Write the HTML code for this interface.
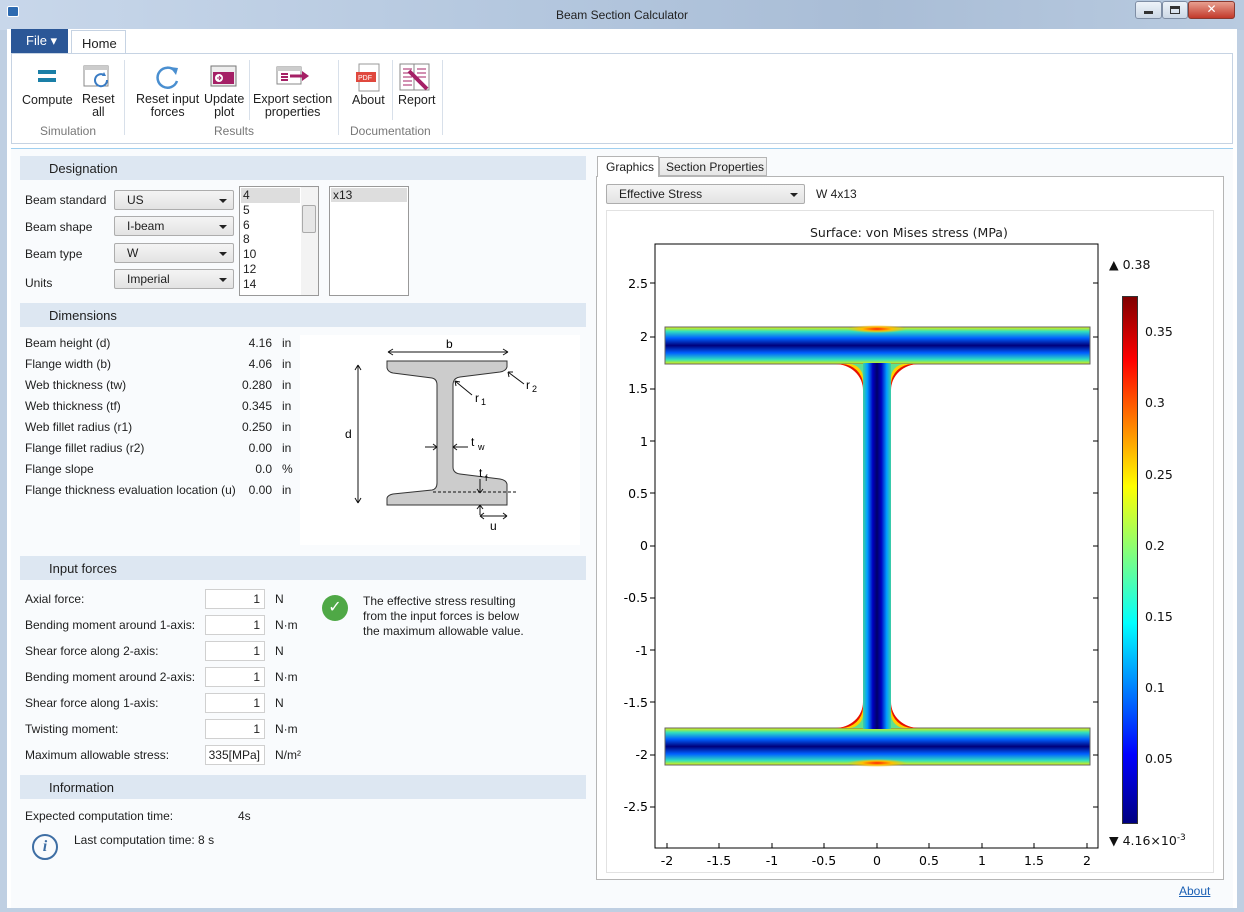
<!DOCTYPE html>
<html><head><meta charset="utf-8"><style>
*{box-sizing:border-box;margin:0;padding:0}
body{width:1244px;height:912px;position:relative;overflow:hidden;font-family:"Segoe UI","Liberation Sans","DejaVu Sans",sans-serif;font-size:12px;color:#1e1e1e;background:#bfcfe2}
.a{position:absolute}
.t{position:absolute;white-space:nowrap}
.hdr{position:absolute;left:20px;width:566px;height:24px;background:#dde7f2;font-size:13px;padding:5px 0 0 29px}
.sel{position:absolute;left:114px;width:120px;height:20px;border:1px solid #adadad;border-radius:2px;background:linear-gradient(#f4f4f4,#e3e3e3);padding:2px 0 0 12px}
.sel:after{content:"";position:absolute;right:6px;top:8px;border:4px solid transparent;border-top:4px solid #222;border-bottom:0}
.inp{position:absolute;left:205px;width:60px;height:20px;border:1px solid #d0d0d0;background:#fff;text-align:right;padding:2px 4px 0 0;font-size:12px}
.ax{position:absolute;font-size:12.5px;font-family:"DejaVu Sans",sans-serif;color:#111}
</style></head><body>
<div class="a" style="left:0;top:0;width:1244px;height:30px;background:linear-gradient(90deg,#c8d7ea,#b5c8df 40%,#a9bdd6 70%,#b9cbe0)"></div>
<div class="a" style="left:7px;top:6px;width:12px;height:11px;background:#2d6ab0;border:1px solid #fff;border-radius:2px"></div>
<div class="t" style="left:0;width:1244px;text-align:center;top:8px;font-size:12px;color:#222">Beam Section Calculator</div>
<div class="a" style="left:1135px;top:1px;width:27px;height:18px;border:1px solid #7f8ea5;border-radius:3px;background:linear-gradient(#eef3f9,#ccd8e6)"></div>
<div class="a" style="left:1162px;top:1px;width:26px;height:18px;border:1px solid #7f8ea5;border-radius:3px;background:linear-gradient(#eef3f9,#ccd8e6)"></div>
<div class="a" style="left:1188px;top:1px;width:47px;height:18px;border:1px solid #8a3a30;border-radius:3px;background:linear-gradient(#e8a090,#c2392a);color:#fff;text-align:center;font-weight:bold;font-size:12px">✕</div>
<div class="a" style="left:1144px;top:11px;width:9px;height:3px;background:#333"></div>
<div class="a" style="left:1170px;top:6px;width:10px;height:8px;border:1px solid #333;border-top-width:3px"></div>
<div class="a" style="left:7px;top:29px;width:1230px;height:879px;background:#fff"></div>
<div class="a" style="left:11px;top:29px;width:57px;height:24px;background:#2b5797;color:#fff;font-size:13px;padding:4px 0 0 15px">File ▾</div>
<div class="a" style="left:71px;top:30px;width:55px;height:24px;background:#fff;border:1px solid #c6d3e3;border-bottom:none;font-size:13px;padding:5px 0 0 10px">Home</div>
<div class="a" style="left:11px;top:53px;width:1222px;height:91px;border:1px solid #c6d3e3;background:#fff"></div>
<div class="a" style="left:38px;top:70px;width:18px;height:4px;background:#1a7fa7"></div>
<div class="a" style="left:38px;top:78px;width:18px;height:4px;background:#1a7fa7"></div>
<svg class="a" style="left:82px;top:64px" width="30" height="26"><rect x="2" y="2" width="24" height="20" fill="#fff" stroke="#888"/><rect x="2" y="2" width="24" height="4" fill="#ccc"/><path d="M25 16a6 6 0 1 1-3-5" fill="none" stroke="#3a7cc4" stroke-width="2"/><path d="M22 8l2 4-4 0z" fill="#3a7cc4"/></svg>
<svg class="a" style="left:153px;top:63px" width="28" height="28"><path d="M22 8A10 10 0 1 0 24 18" fill="none" stroke="#4a8fd0" stroke-width="2.5"/><path d="M17 4l8 1-2 7z" fill="#4a8fd0"/></svg>
<svg class="a" style="left:210px;top:65px" width="28" height="24"><rect x="1" y="1" width="25" height="20" fill="#eee" stroke="#777"/><rect x="3" y="7" width="21" height="12" fill="#a52066"/><circle cx="9" cy="13" r="4" fill="#fff"/><path d="M7 13h4M9 11l2 2-2 2" stroke="#a52066" fill="none"/></svg>
<svg class="a" style="left:276px;top:66px" width="34" height="20"><rect x="1" y="1" width="24" height="17" fill="#fff" stroke="#888"/><rect x="1" y="1" width="24" height="4" fill="#ccc"/><g fill="#a52066"><rect x="5" y="7" width="7" height="2"/><rect x="5" y="10" width="7" height="2"/><rect x="5" y="13" width="7" height="2"/></g><path d="M14 10h14" stroke="#a52066" stroke-width="3"/><path d="M26 5l7 5-7 5z" fill="#a52066"/></svg>
<svg class="a" style="left:355px;top:63px" width="26" height="30"><rect x="4" y="1" width="20" height="27" fill="#fff" stroke="#999"/><rect x="1" y="9" width="20" height="10" fill="#e0483e"/><text x="3" y="17" font-size="7" fill="#fff" font-family="Liberation Sans">PDF</text></svg>
<svg class="a" style="left:399px;top:63px" width="32" height="30"><rect x="1" y="1" width="29" height="26" fill="#fff" stroke="#888"/><path d="M15 1v26" stroke="#888"/><g stroke="#a52066"><path d="M4 6h9M4 10h9M4 14h9M4 18h9M4 22h9M18 6h9M18 10h9M18 14h9"/></g><path d="M10 8l18 18" stroke="#a52066" stroke-width="4"/></svg>
<div class="t" style="left:22px;top:93px;font-size:12.5px">Compute</div>
<div class="t" style="left:82px;top:93px;font-size:12.5px;text-align:center;line-height:13px">Reset<br>all</div>
<div class="t" style="left:136px;top:93px;font-size:12.5px;text-align:center;line-height:13px">Reset input<br>forces</div>
<div class="t" style="left:204px;top:93px;font-size:12.5px;text-align:center;line-height:13px">Update<br>plot</div>
<div class="t" style="left:253px;top:93px;font-size:12.5px;text-align:center;line-height:13px">Export section<br>properties</div>
<div class="t" style="left:352px;top:93px;font-size:12.5px">About</div>
<div class="t" style="left:398px;top:93px;font-size:12.5px">Report</div>
<div class="t" style="left:40px;top:124px;color:#777">Simulation</div>
<div class="t" style="left:214px;top:124px;color:#777">Results</div>
<div class="t" style="left:350px;top:124px;color:#777">Documentation</div>
<div class="a" style="left:124px;top:60px;width:1px;height:75px;background:#d8e0ea"></div>
<div class="a" style="left:249px;top:60px;width:1px;height:60px;background:#d8e0ea"></div>
<div class="a" style="left:338px;top:60px;width:1px;height:75px;background:#d8e0ea"></div>
<div class="a" style="left:392px;top:60px;width:1px;height:60px;background:#d8e0ea"></div>
<div class="a" style="left:442px;top:60px;width:1px;height:75px;background:#d8e0ea"></div>
<div class="a" style="left:11px;top:148px;width:1222px;height:760px;background:#f9fbfd;border-top:1px solid #9fcff0"></div>
<div class="hdr" style="top:156px">Designation</div>
<div class="hdr" style="top:303px">Dimensions</div>
<div class="hdr" style="top:556px">Input forces</div>
<div class="hdr" style="top:775px">Information</div>
<div class="t" style="left:25px;top:193px">Beam standard</div>
<div class="t" style="left:25px;top:220px">Beam shape</div>
<div class="t" style="left:25px;top:247px">Beam type</div>
<div class="t" style="left:25px;top:276px">Units</div>
<div class="sel" style="top:190px">US</div>
<div class="sel" style="top:216px">I-beam</div>
<div class="sel" style="top:243px">W</div>
<div class="sel" style="top:269px">Imperial</div>
<div class="a" style="left:239px;top:186px;width:80px;height:110px;border:1px solid #999;background:#fff;line-height:14.8px;padding:1px 0 0 3px;font-family:'Liberation Sans';font-size:12px">
<div style="background:#ddd;margin:0 18px 0 -2px;padding-left:2px">4</div>5<br>6<br>8<br>10<br>12<br>14</div>
<div class="a" style="left:301px;top:187px;width:17px;height:108px;background:#f3f3f3"></div>
<div class="a" style="left:302px;top:205px;width:14px;height:28px;border:1px solid #aaa;border-radius:2px;background:#e6e6e6"></div>
<div class="a" style="left:329px;top:186px;width:80px;height:110px;border:1px solid #999;background:#fff;padding:1px;font-family:'Liberation Sans'"><div style="background:#ddd;padding-left:2px">x13</div></div>
<div class="a" style="left:25px;top:333px;width:280px;height:210px;line-height:21px">
<div>Beam height (d)</div><div>Flange width (b)</div><div>Web thickness (tw)</div><div>Web thickness (tf)</div><div>Web fillet radius (r1)</div><div>Flange fillet radius (r2)</div><div>Flange slope</div><div>Flange thickness evaluation location (u)</div></div>
<div class="a" style="left:200px;top:333px;width:72px;line-height:21px;text-align:right">4.16<br>4.06<br>0.280<br>0.345<br>0.250<br>0.00<br>0.0<br>0.00</div>
<div class="a" style="left:282px;top:333px;line-height:21px">in<br>in<br>in<br>in<br>in<br>in<br>%<br>in</div>
<div class="a" style="left:300px;top:335px;width:280px;height:210px;background:#fff"></div>
<svg class="a" style="left:300px;top:335px" width="280" height="210" font-family="Liberation Sans" font-size="12">
<path d="M87 26H207V32Q206 36 200 37L160 42Q153 43 153 50V132Q153 138 160 139L200 144Q206 145 207 149V170H87V163Q88 160 93 159L132 155Q137 154 137 148V50Q137 44 132 43L93 38Q88 37 87 33Z" fill="#ccc" stroke="#333"/>
<path d="M88 17H208M88 17l5-3M88 17l5 3M208 17l-5-3M208 17l-5 3" stroke="#111" fill="none"/>
<text x="146" y="13">b</text>
<path d="M58 30V168M58 30l-3 5M58 30l3 5M58 168l-3-5M58 168l3-5" stroke="#111" fill="none"/>
<text x="45" y="103">d</text>
<path d="M125 112h12M137 112l-4-3M137 112l-4 3M168 112h-15M153 112l4-3M153 112l4 3" stroke="#111" fill="none"/>
<text x="171" y="111">t</text><text x="178" y="115" font-size="9">w</text>
<path d="M133 157H217" stroke="#111" stroke-dasharray="3 2"/>
<path d="M180 144v14M180 158l-3-4M180 158l3-4" stroke="#111" fill="none"/>
<text x="179" y="142">t</text><text x="185" y="146" font-size="9">f</text>
<path d="M180 170v10M180 170l-3 4M180 170l3 4M180 181h27M180 181l4-3M180 181l4 3M207 181l-4-3M207 181l-4 3" stroke="#111" fill="none"/>
<text x="190" y="195">u</text>
<path d="M155 46l17 14M155 46l5 1M155 46l1 5" stroke="#111" fill="none"/>
<text x="175" y="67">r</text><text x="181" y="70" font-size="9">1</text>
<path d="M208 37l16 12M208 37l5 0M208 37l1 5" stroke="#111" fill="none"/>
<text x="226" y="54">r</text><text x="232" y="57" font-size="9">2</text>
</svg>
<div class="a" style="left:25px;top:586px;line-height:26px">Axial force:<br>Bending moment around 1-axis:<br>Shear force along 2-axis:<br>Bending moment around 2-axis:<br>Shear force along 1-axis:<br>Twisting moment:<br>Maximum allowable stress:</div>
<div class="inp" style="top:589px">1</div><div class="inp" style="top:615px">1</div><div class="inp" style="top:641px">1</div><div class="inp" style="top:667px">1</div><div class="inp" style="top:693px">1</div><div class="inp" style="top:719px">1</div><div class="inp" style="top:745px">335[MPa]</div>
<div class="a" style="left:275px;top:586px;line-height:26px">N<br>N·m<br>N<br>N·m<br>N<br>N·m<br>N/m²</div>
<div class="a" style="left:322px;top:595px;width:26px;height:26px;border-radius:50%;background:#4fa846;color:#fff;text-align:center;font-size:16px;line-height:26px">✓</div>
<div class="t" style="left:363px;top:594px;line-height:15px">The effective stress resulting<br>from the input forces is below<br>the maximum allowable value.</div>
<div class="t" style="left:25px;top:809px">Expected computation time:</div>
<div class="t" style="left:238px;top:809px">4s</div>
<div class="a" style="left:32px;top:834px;width:26px;height:26px;border-radius:50%;border:2px solid #3e6ea4;color:#3e6ea4;text-align:center;font:italic bold 16px/22px 'Liberation Serif',serif">i</div>
<div class="t" style="left:74px;top:833px">Last computation time: 8 s</div>
<div class="a" style="left:596px;top:176px;width:628px;height:704px;border:1px solid #b5b5b5;background:#fff"></div>
<div class="a" style="left:597px;top:156px;width:62px;height:21px;border:1px solid #b5b5b5;border-bottom:none;background:#fff;padding:3px 0 0 8px">Graphics</div>
<div class="a" style="left:659px;top:157px;width:108px;height:19px;border:1px solid #b5b5b5;background:linear-gradient(#f4f4f4,#e6e6e6);padding:2px 0 0 6px">Section Properties</div>
<div class="sel" style="left:606px;top:184px;width:199px;height:20px">Effective Stress</div>
<div class="t" style="left:816px;top:187px">W 4x13</div>
<div class="a" style="left:606px;top:210px;width:608px;height:663px;border:1px solid #e2e2e2;background:#fff"></div>
<div class="t" style="left:810px;top:225px;font-family:'DejaVu Sans';font-size:12.5px">Surface: von Mises stress (MPa)</div>
<svg class="a" style="left:606px;top:240px" width="520" height="625" font-family="DejaVu Sans" font-size="12.5">
<defs>
<linearGradient id="fl" x1="0" y1="0" x2="0" y2="1"><stop offset="0" stop-color="#e8f000"/><stop offset=".12" stop-color="#30e0c0"/><stop offset=".3" stop-color="#0060ff"/><stop offset=".5" stop-color="#00007a"/><stop offset=".7" stop-color="#0060ff"/><stop offset=".88" stop-color="#30e0c0"/><stop offset="1" stop-color="#e8f000"/></linearGradient>
<linearGradient id="wb" x1="0" y1="0" x2="1" y2="0"><stop offset="0" stop-color="#40d0a0"/><stop offset=".15" stop-color="#00a0ff"/><stop offset=".35" stop-color="#0000c0"/><stop offset=".5" stop-color="#00006a"/><stop offset=".65" stop-color="#0000c0"/><stop offset=".85" stop-color="#00a0ff"/><stop offset="1" stop-color="#40d0a0"/></linearGradient>
<radialGradient id="hot"><stop offset="0" stop-color="#ff2000"/><stop offset=".5" stop-color="#ffc000"/><stop offset="1" stop-color="#ffc000" stop-opacity="0"/></radialGradient>
</defs>
<rect x="49" y="4" width="443" height="604" fill="none" stroke="#000"/>
<rect x="59" y="87" width="425" height="37" fill="url(#fl)" stroke="#666"/>
<rect x="59" y="488" width="425" height="37" fill="url(#fl)" stroke="#666"/>
<ellipse cx="271" cy="89" rx="30" ry="4" fill="url(#hot)"/>
<ellipse cx="271" cy="523" rx="30" ry="4" fill="url(#hot)"/>
<g fill="#e81000">
<path d="M229 124A28 26 0 0 1 257 150V124Z"/>
<path d="M313 124A28 26 0 0 0 285 150V124Z"/>
<path d="M229 488A28 26 0 0 0 257 462V488Z"/>
<path d="M313 488A28 26 0 0 1 285 462V488Z"/>
</g>
<g fill="#ffd000">
<path d="M236 124A22 21 0 0 1 257 144V124Z"/>
<path d="M306 124A22 21 0 0 0 285 144V124Z"/>
<path d="M236 488A22 21 0 0 0 257 468V488Z"/>
<path d="M306 488A22 21 0 0 1 285 468V488Z"/>
</g>
<g fill="#60e090">
<path d="M244 124A14 14 0 0 1 257 137V124Z"/>
<path d="M298 124A14 14 0 0 0 285 137V124Z"/>
<path d="M244 488A14 14 0 0 0 257 475V488Z"/>
<path d="M298 488A14 14 0 0 1 285 475V488Z"/>
</g>
<rect x="257" y="123" width="28" height="366" fill="url(#wb)"/>
<g stroke="#000"><path d="M49 43h-5M49 97h-5M49 201h-5M49 306h-5M49 410h-5M49 515h-5M49 567h-5M49 149h-5M49 253h-5M49 358h-5M49 462h-5"/>
<path d="M492 43h-5M492 97h-5M492 149h-5M492 201h-5M492 253h-5M492 306h-5M492 358h-5M492 410h-5M492 462h-5M492 515h-5M492 567h-5"/>
<path d="M61 608v-5M113 608v-5M166 608v-5M218 608v-5M271 608v-5M323 608v-5M376 608v-5M428 608v-5M481 608v-5"/></g>
<g text-anchor="end"><text x="42" y="48">2.5</text><text x="42" y="101">2</text><text x="42" y="153">1.5</text><text x="42" y="206">1</text><text x="42" y="258">0.5</text><text x="42" y="310">0</text><text x="42" y="362">-0.5</text><text x="42" y="415">-1</text><text x="42" y="467">-1.5</text><text x="42" y="519">-2</text><text x="42" y="571">-2.5</text></g>
<g text-anchor="middle"><text x="61" y="625">-2</text><text x="113" y="625">-1.5</text><text x="166" y="625">-1</text><text x="218" y="625">-0.5</text><text x="271" y="625">0</text><text x="323" y="625">0.5</text><text x="376" y="625">1</text><text x="428" y="625">1.5</text><text x="481" y="625">2</text></g>
</svg>
<div class="a" style="left:1122px;top:296px;width:16px;height:528px;border:1px solid #333;background:linear-gradient(#800000,#ff0000 12%,#ffff00 36%,#00ffff 62%,#0000ff 87%,#000080)"></div>
<div class="ax" style="left:1109px;top:257px">▲ 0.38</div>
<div class="ax" style="left:1109px;top:833px">▼ 4.16×10<sup style="font-size:9px">-3</sup></div>
<div class="ax" style="left:1145px;top:324px">0.35</div>
<div class="ax" style="left:1145px;top:395px">0.3</div>
<div class="ax" style="left:1145px;top:467px">0.25</div>
<div class="ax" style="left:1145px;top:538px">0.2</div>
<div class="ax" style="left:1145px;top:609px">0.15</div>
<div class="ax" style="left:1145px;top:680px">0.1</div>
<div class="ax" style="left:1145px;top:751px">0.05</div>
<div class="t" style="left:1179px;top:884px;color:#1a5fb4;text-decoration:underline">About</div>
</body></html>
